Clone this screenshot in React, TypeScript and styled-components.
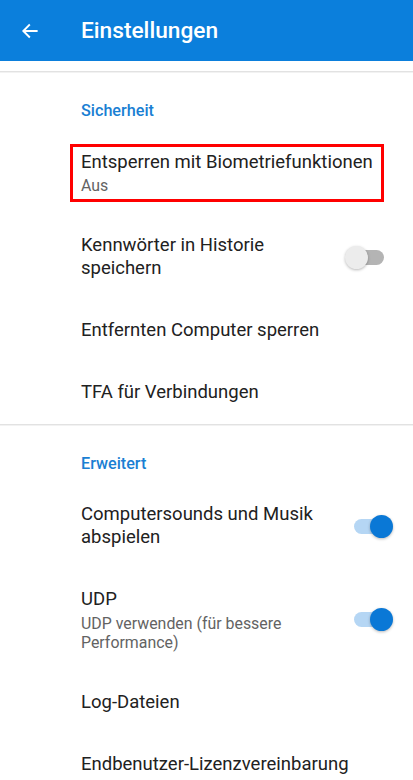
import styled, { createGlobalStyle } from "styled-components";

const GlobalStyle = createGlobalStyle`
  html, body {
    margin: 0;
    padding: 0;
    background: #ffffff;
  }
  body {
    font-family: Roboto, "Liberation Sans", Arial, sans-serif;
    -webkit-font-smoothing: antialiased;
  }
`;

type Item = {
  title: string;
  summary?: string;
  toggle?: "on" | "off";
  highlighted?: boolean;
};

type Section = {
  name: string;
  items: Item[];
};

const sections: Section[] = [
  {
    name: "Sicherheit",
    items: [
      { title: "Entsperren mit Biometriefunktionen", summary: "Aus", highlighted: true },
      { title: "Kennwörter in Historie speichern", toggle: "off" },
      { title: "Entfernten Computer sperren" },
      { title: "TFA für Verbindungen" },
    ],
  },
  {
    name: "Erweitert",
    items: [
      { title: "Computersounds und Musik abspielen", toggle: "on" },
      { title: "UDP", summary: "UDP verwenden (für bessere Performance)", toggle: "on" },
      { title: "Log-Dateien" },
      { title: "Endbenutzer-Lizenzvereinbarung" },
    ],
  },
];

const Screen = styled.div`
  width: 413px;
  height: 780px;
  overflow: hidden;
  background: #ffffff;
  display: flex;
  flex-direction: column;
`;

const AppBar = styled.header`
  height: 61px;
  flex-shrink: 0;
  background: #0b7fdc;
  display: flex;
  align-items: center;
  padding-left: 20px;
  gap: 41px;
`;

const BackButton = styled.button`
  width: 20px;
  height: 20px;
  padding: 0;
  border: none;
  background: transparent;
  display: flex;
  align-items: center;
  justify-content: center;
  color: #ffffff;
`;

const Title = styled.h1`
  margin: 0 0 1px;
  font-size: 22.7px;
  font-weight: 500;
  color: #ffffff;
`;

const Divider = styled.div<{ $top?: number }>`
  height: 1px;
  flex-shrink: 0;
  margin-top: ${(p) => p.$top ?? 0}px;
  background: #e2e2e2;
  box-shadow: 0 1px 0 #f2f2f2;
`;

const Category = styled.div`
  padding: 29px 20px 10px 81px;
  font-size: 16.2px;
  line-height: 20px;
  font-weight: 500;
  color: #1a7fd3;
`;

const Row = styled.div`
  display: flex;
  align-items: center;
  padding: 19.5px 20px 19.5px 81px;
`;

const TextBlock = styled.div<{ $highlighted?: boolean }>`
  flex: 1;
  min-width: 0;
  position: relative;

  ${(p) =>
    p.$highlighted &&
    `
    &::before {
      content: "";
      position: absolute;
      left: -11px;
      right: 9px;
      top: -6.5px;
      bottom: -7px;
      border: 3px solid #ff0000;
      pointer-events: none;
    }
  `}
`;

const ItemTitle = styled.div`
  font-size: 18.5px;
  line-height: 23px;
  color: #212121;
`;

const Summary = styled.div`
  margin-top: 2.5px;
  font-size: 15.9px;
  line-height: 19px;
  color: #636363;
`;

const Widget = styled.div`
  margin-left: 16px;
  flex-shrink: 0;
`;

const Switch = styled.div<{ $on: boolean }>`
  position: relative;
  width: 48px;
  height: 24px;

  &::before {
    content: "";
    position: absolute;
    left: 9px;
    top: 4.5px;
    width: 30px;
    height: 15px;
    border-radius: 8px;
    background: ${(p) => (p.$on ? "#b5d6f4" : "#b4b4b4")};
  }

  &::after {
    content: "";
    position: absolute;
    top: 0.5px;
    left: ${(p) => (p.$on ? "25px" : "0px")};
    width: 23px;
    height: 23px;
    border-radius: 50%;
    background: ${(p) => (p.$on ? "#0a78d6" : "#ececec")};
    box-shadow: 0 1px 3px rgba(0, 0, 0, 0.28);
  }
`;

function BackArrow() {
  return (
    <svg width="20" height="20" viewBox="0 0 24 24" fill="none">
      <path
        d="M20 12H4.5M11 5l-7 7 7 7"
        stroke="currentColor"
        strokeWidth="2.3"
        strokeLinecap="square"
      />
    </svg>
  );
}

function Preference({ item }: { item: Item }) {
  return (
    <Row>
      <TextBlock $highlighted={item.highlighted}>
        <ItemTitle>{item.title}</ItemTitle>
        {item.summary && <Summary>{item.summary}</Summary>}
      </TextBlock>
      {item.toggle && (
        <Widget>
          <Switch $on={item.toggle === "on"} />
        </Widget>
      )}
    </Row>
  );
}

export default function App() {
  return (
    <>
      <GlobalStyle />
      <Screen>
        <AppBar>
          <BackButton aria-label="Zurück">
            <BackArrow />
          </BackButton>
          <Title>Einstellungen</Title>
        </AppBar>
        <Divider $top={10} />
        {sections.map((section, i) => (
          <div key={section.name}>
            {i > 0 && <Divider />}
            <Category>{section.name}</Category>
            {section.items.map((item) => (
              <Preference key={item.title} item={item} />
            ))}
          </div>
        ))}
      </Screen>
    </>
  );
}
